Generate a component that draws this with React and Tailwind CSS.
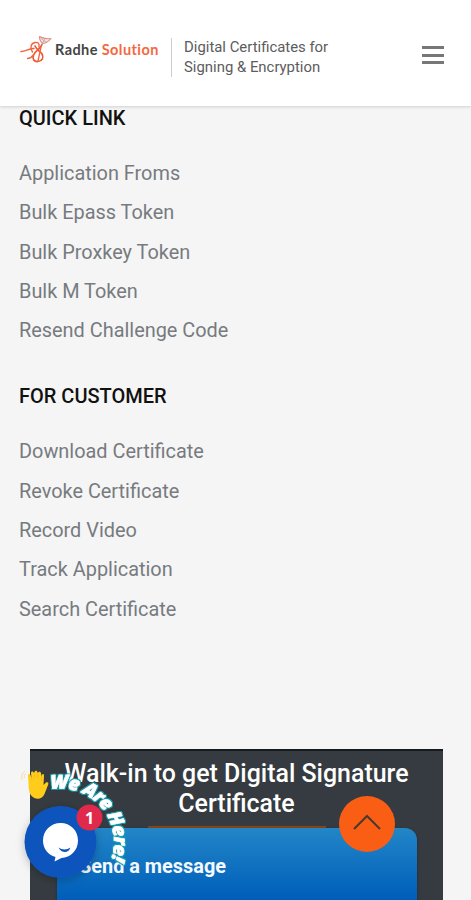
const sections = [
  {
    title: "QUICK LINK",
    links: [
      "Application Froms",
      "Bulk Epass Token",
      "Bulk Proxkey Token",
      "Bulk M Token",
      "Resend Challenge Code",
    ],
  },
  {
    title: "FOR CUSTOMER",
    links: [
      "Download Certificate",
      "Revoke Certificate",
      "Record Video",
      "Track Application",
      "Search Certificate",
    ],
  },
];

function Logo() {
  return (
    <div className="flex items-center">
      <svg width="34" height="30" viewBox="0 0 34 30" fill="none" strokeLinecap="round" strokeLinejoin="round">
        <path d="M1 16.500C5 17 9 13 14 13.500" stroke="#f0643c" strokeWidth="1.500" />
        <path d="M12.500 17C9.500 13 11 8 15 7.500C18.500 7 19.500 9 19 12" stroke="#f0643c" strokeWidth="1.400" />
        <path d="M22 9.500C20.500 14 15 16 13.500 20C12 24.500 14.500 27 18 26.500C22.500 26 24 22.500 22 19C20.500 16.500 17 15.500 15 11" stroke="#ee5a35" strokeWidth="1.700" />
        <path d="M13.500 20C12 22 10 23.500 7.500 23.500M21 12L19.500 19L18 26" stroke="#f0643c" strokeWidth="1.300" />
        <path d="M19.500 1.500C23 3.500 27 4 31 3.500C29 6 27 8 23 8.500C20.500 7 19.500 4 19.500 1.500Z" fill="#f8e4e0" stroke="#e08a80" strokeWidth="1.100" />
        <path d="M21 3.500L26 7M25 4L22.500 8" stroke="#a39aa5" strokeWidth="0.700" />
      </svg>
      <p className="ml-[1px] whitespace-nowrap font-[Lato] text-[14.500px] leading-5 font-bold tracking-[0.420px] text-[#444]">
        Radhe <span className="text-[#f4693f]">Solution</span>
      </p>
    </div>
  );
}

function Header() {
  return (
    <header className="relative z-10 flex h-[106px] items-center bg-white pt-[8px] pr-[27px] pl-[20px] shadow-[0_1px_3px_rgba(0,0,0,0.15)]">
      <div className="w-[151px] pb-[14px]">
        <Logo />
      </div>
      <p className="h-[39px] border-l border-[#ccc] pl-[12px] text-[14.900px] leading-[20px] whitespace-nowrap text-[#5c5c5c]">
        <span className="-mt-[1px] block">Digital Certificates for</span>
        <span className="block">Signing &amp; Encryption</span>
      </p>
      <button className="-mt-[4px] ml-auto flex w-[22px] flex-col gap-[4.500px]" aria-label="Menu">
        <span className="h-[3px] w-full bg-[#777]" />
        <span className="h-[3px] w-full bg-[#777]" />
        <span className="h-[3px] w-full bg-[#777]" />
      </button>
    </header>
  );
}

function LinkList({ title, links }) {
  return (
    <section className="mb-[34px]">
      <h2 className="text-[20px] leading-[24px] font-medium text-[#111]">{title}</h2>
      <ul className="mt-[24px]">
        {links.map((link) => (
          <li key={link} className="h-[39.300px] text-[19.900px] leading-[39px] text-[#777b7f]">
            {link}
          </li>
        ))}
      </ul>
    </section>
  );
}

function WaveHand() {
  return (
    <g>
      <path
        d="M8 15.500C8 14 9.500 13.500 10.500 15L11.500 18L11 13C11 11 13.500 11 14 13L14.500 12C15 10 17.500 10.500 17.500 12.500L18 13C18.500 11 21 11.500 21 13.500L22 17V15C22.500 13.500 24 14 24 15.500L23.500 25L26 22.500C28 21.500 29 23 28 25L24.500 34C22.500 38.500 18 40 13.500 37.500C9 35 8.500 28 8.500 23Z"
        fill="#ffcc1c"
      />
      <path d="M11.500 18L12 21M14.500 14V19M18 14V19M21.500 17V21" stroke="#eeb313" strokeWidth="0.600" fill="none" />
      <path d="M2 20C1 16 2 13 5 11M4.500 18C4 16 4.500 14.500 6 13.500" stroke="#f7dfa0" strokeWidth="1" fill="none" />
    </g>
  );
}

function ChatBubble() {
  return (
    <div className="absolute bottom-0 left-[20px] z-20 h-[140px] w-[116px]">
      <svg width="116" height="140" viewBox="0 0 116 140" className="overflow-visible">
        <defs>
          <path id="arc" d="M-13 82A53.500 53.500 0 1 1 94 82A53.500 53.500 0 1 1 -13 82" />
          <filter id="soft" x="-50%" y="-50%" width="200%" height="200%">
            <feDropShadow dx="0" dy="2" stdDeviation="4" floodOpacity="0.25" />
          </filter>
          <filter id="glow" x="-20%" y="-20%" width="140%" height="140%">
            <feMorphology in="SourceAlpha" operator="dilate" radius="1" result="fat" />
            <feGaussianBlur in="fat" stdDeviation="0.700" result="haze" />
            <feFlood floodColor="#10a5b5" />
            <feComposite in2="haze" operator="in" result="tint" />
            <feMerge>
              <feMergeNode in="tint" />
              <feMergeNode in="SourceGraphic" />
            </feMerge>
          </filter>
        </defs>
        <WaveHand />
        <text
          className="font-['Open_Sans'] text-[19px] font-extrabold italic"
          fill="#fff"
          stroke="#fff"
          strokeWidth="0.500"
          strokeLinejoin="round"
          filter="url(#glow)"
        >
          <textPath href="#arc" startOffset="74" textLength="112" lengthAdjust="spacing">
            We Are Here!
          </textPath>
        </text>
        <circle cx="40.500" cy="82" r="36" fill="#0b55bd" filter="url(#soft)" />
        <path
          d="M40.500 63C50.500 63 58 70.500 58 80.500C58 90.500 50.500 97.500 41.500 98L34.500 101.500L35.500 97C28 95 23 88.500 23 80.500C23 70.500 31 63 40.500 63Z"
          fill="#fff"
        />
        <path d="M38.500 87.500C42 90 47 90 50.500 87.500C48.500 93.500 41.500 93.500 38.500 87.500Z" fill="#0b55bd" />
        <circle cx="69.500" cy="57.500" r="13" fill="#e1294b" />
        <text x="69.500" y="63.500" textAnchor="middle" className="font-['Open_Sans'] text-[16px] font-bold" fill="#fff">
          1
        </text>
      </svg>
    </div>
  );
}

function WalkIn() {
  return (
    <section className="relative mr-[28px] ml-[30px] h-[151px] border-t-2 border-[#181b1e] bg-[#353b40]">
      <h2 className="pt-[8px] text-center text-[24.950px] leading-[30px] font-medium whitespace-nowrap text-white">
        Walk-in to get Digital Signature
        <br />
        Certificate
      </h2>
      <div className="mx-auto mt-[7px] h-[2px] w-[178px] bg-[#8a4513]" />
      <div className="mr-[26px] ml-[27px] h-[73px] rounded-t-[12px] bg-linear-to-b from-[#2286c7] to-[#005cb9] pt-[26px] pl-[22px] shadow-[0_1px_3px_rgba(0,0,0,0.3)]">
        <p className="text-[19.900px] leading-[26px] font-bold text-[#f4f9ff]">Send a message</p>
      </div>
      <button
        className="absolute top-[45px] left-[309px] flex size-[56px] items-center justify-center rounded-full bg-[#fa5e14]"
        aria-label="Back to top"
      >
        <svg width="28" height="16" viewBox="0 0 28 16" fill="none" className="-mt-[5px]">
          <path d="M1 15L14 2L27 15" stroke="#49392f" strokeWidth="2" />
        </svg>
      </button>
    </section>
  );
}

export default function App() {
  return (
    <div className="relative h-[900px] w-full overflow-hidden bg-[#f5f5f5] font-[Roboto,sans-serif]">
      <Header />
      <main className="h-[643px] px-[19px]">
        {sections.map((s) => (
          <LinkList key={s.title} {...s} />
        ))}
      </main>
      <WalkIn />
      <ChatBubble />
    </div>
  );
}
